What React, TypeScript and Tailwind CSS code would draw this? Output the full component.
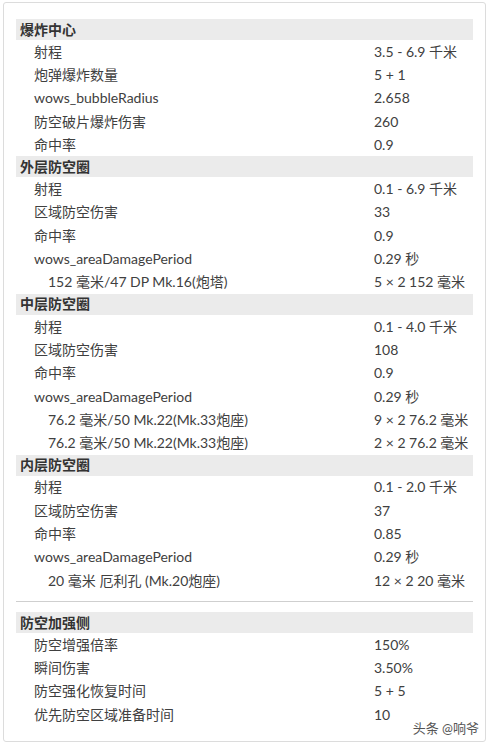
type Row = { label: string; value: string; sub?: boolean };
type Section = { title: string; rows: Row[] };

const sections: Section[] = [
  {
    title: "爆炸中心",
    rows: [
      { label: "射程", value: "3.5 - 6.9 千米" },
      { label: "炮弹爆炸数量", value: "5 + 1" },
      { label: "wows_bubbleRadius", value: "2.658" },
      { label: "防空破片爆炸伤害", value: "260" },
      { label: "命中率", value: "0.9" },
    ],
  },
  {
    title: "外层防空圈",
    rows: [
      { label: "射程", value: "0.1 - 6.9 千米" },
      { label: "区域防空伤害", value: "33" },
      { label: "命中率", value: "0.9" },
      { label: "wows_areaDamagePeriod", value: "0.29 秒" },
      { label: "152 毫米/47 DP Mk.16(炮塔)", value: "5 × 2 152 毫米", sub: true },
    ],
  },
  {
    title: "中层防空圈",
    rows: [
      { label: "射程", value: "0.1 - 4.0 千米" },
      { label: "区域防空伤害", value: "108" },
      { label: "命中率", value: "0.9" },
      { label: "wows_areaDamagePeriod", value: "0.29 秒" },
      { label: "76.2 毫米/50 Mk.22(Mk.33炮座)", value: "9 × 2 76.2 毫米", sub: true },
      { label: "76.2 毫米/50 Mk.22(Mk.33炮座)", value: "2 × 2 76.2 毫米", sub: true },
    ],
  },
  {
    title: "内层防空圈",
    rows: [
      { label: "射程", value: "0.1 - 2.0 千米" },
      { label: "区域防空伤害", value: "37" },
      { label: "命中率", value: "0.85" },
      { label: "wows_areaDamagePeriod", value: "0.29 秒" },
      { label: "20 毫米 厄利孔 (Mk.20炮座)", value: "12 × 2 20 毫米", sub: true },
    ],
  },
];

const boost: Section = {
  title: "防空加强侧",
  rows: [
    { label: "防空增强倍率", value: "150%" },
    { label: "瞬间伤害", value: "3.50%" },
    { label: "防空强化恢复时间", value: "5 + 5" },
    { label: "优先防空区域准备时间", value: "10" },
  ],
};

function Block({ section }: { section: Section }) {
  return (
    <div>
      <div className="h-[21px] bg-[#ebebeb] pl-[4px] flex items-center font-bold text-[#333]">
        {section.title}
      </div>
      {section.rows.map((r, i) => (
        <div key={i} className="h-[23.3px] flex items-center">
          <div className={`w-[358px] shrink-0 ${r.sub ? "pl-[32px]" : "pl-[18px]"}`}>{r.label}</div>
          <div>{r.value}</div>
        </div>
      ))}
    </div>
  );
}

export default function App() {
  return (
    <div
      className="w-[491px] h-[745px] bg-white pt-[2px] pl-[3px] text-[14px] text-[#404040] leading-none"
      style={{ fontFamily: 'Lato, "Noto Sans CJK SC", sans-serif' }}
    >
      <div className="relative w-[483px] h-[740px] border border-[#dcdcdc] rounded-[3px] pt-[16px] pl-[12px]">
        <div className="w-[457px]">
          {sections.map((s) => (
            <Block key={s.title} section={s} />
          ))}
          <div className="mt-[9px] mb-[10px] h-px bg-[#cfcfcf]" />
          <Block section={boost} />
        </div>
        <div className="absolute right-[6px] bottom-[6px] text-[13px] text-[#555] [text-shadow:0_0_2px_#fff]">
          头条 @响爷
        </div>
      </div>
    </div>
  );
}
